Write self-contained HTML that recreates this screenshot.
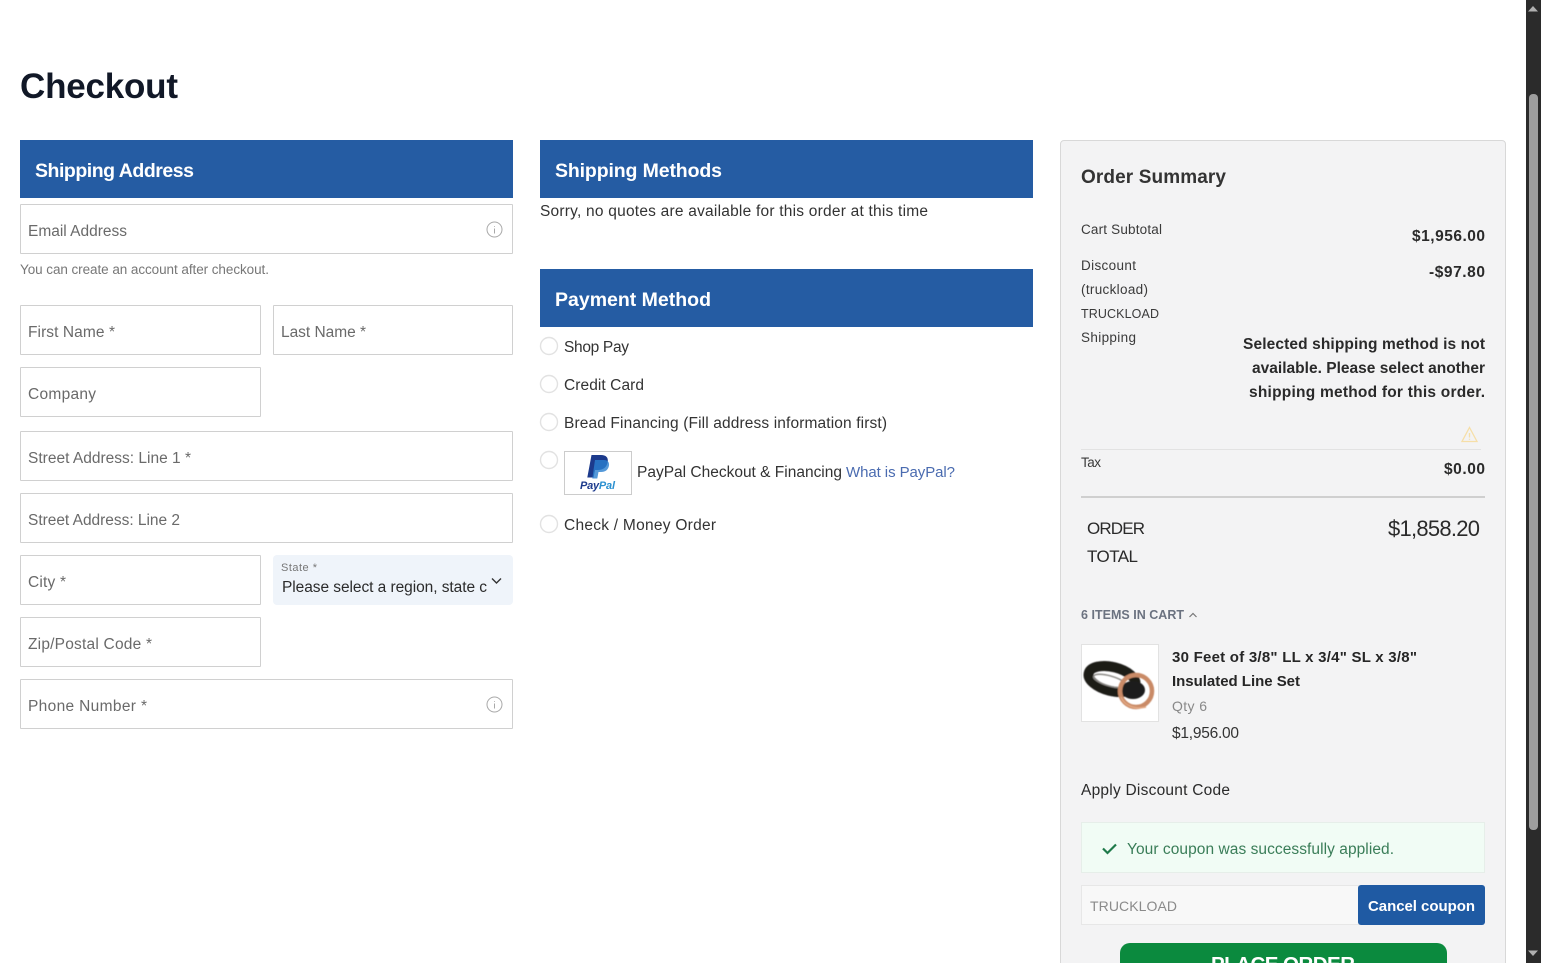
<!DOCTYPE html>
<html lang="en"><head><meta charset="utf-8"><title>Checkout</title>
<style>
html,body{margin:0;padding:0;width:1541px;height:963px;overflow:hidden;background:#fff}
body{position:relative;font-family:"Liberation Sans",sans-serif}
.b{position:absolute;box-sizing:border-box}
.h{background:#255ca3;height:58px;width:493px;top:140px}
.i{border:1px solid #d0d0d0;background:#fff;border-radius:1px;height:50px}
svg.t{position:absolute;left:0;top:0}
text{font-family:"Liberation Sans",sans-serif;font-size:15.5px;fill:#333}
.ph{fill:#6a6a6a}
.hd{font-size:19.5px;font-weight:700;fill:#fff}
.s{font-size:13.5px;fill:#3a3a3a}
.v{font-size:15.5px;font-weight:700;fill:#2a2a2a}
</style></head><body>
<div class="b h" style="left:20px"></div>
<div class="b h" style="left:540px"></div>
<div class="b h" style="left:540px;top:269px"></div>
<div class="b i" style="left:20px;top:204px;width:493px"></div>
<div class="b i" style="left:20px;top:305px;width:241px"></div>
<div class="b i" style="left:273px;top:305px;width:240px"></div>
<div class="b i" style="left:20px;top:367px;width:241px"></div>
<div class="b i" style="left:20px;top:431px;width:493px"></div>
<div class="b i" style="left:20px;top:493px;width:493px"></div>
<div class="b i" style="left:20px;top:555px;width:241px"></div>
<div class="b" style="left:273px;top:555px;width:240px;height:50px;background:#eff4fa;border-radius:4px"></div>
<div class="b i" style="left:20px;top:617px;width:241px"></div>
<div class="b i" style="left:20px;top:679px;width:493px"></div>
<div class="b" style="left:564px;top:451px;width:68px;height:44px;border:1px solid #ccc;background:#fff"></div>
<div class="b" style="left:1060px;top:140px;width:446px;height:840px;background:#f3f3f4;border:1px solid #d8d8d8;border-radius:4px"></div>
<div class="b" style="left:1081px;top:449px;width:400px;height:1px;background:#e2e2e2"></div>
<div class="b" style="left:1081px;top:496px;width:404px;height:2px;background:#cfcfcf"></div>
<div class="b" style="left:1081px;top:644px;width:78px;height:78px;background:#fff;border:1px solid #e2e2e2"></div>
<div class="b" style="left:1081px;top:822px;width:404px;height:51px;background:#f1fcf5;border:1px solid #e6eee9"></div>
<div class="b" style="left:1081px;top:885px;width:278px;height:40px;background:#f8f8f8;border:1px solid #e7e7e7"></div>
<div class="b" style="left:1358px;top:885px;width:127px;height:40px;background:#1f5aa3;border-radius:3px"></div>
<div class="b" style="left:1120px;top:943px;width:327px;height:40px;background:#0b8a3e;border-radius:10px"></div>
<div class="b" style="left:1526px;top:0;width:15px;height:963px;background:#2b2b2b"></div>
<div class="b" style="left:1529px;top:94px;width:9px;height:736px;background:#9e9e9e;border-radius:4px"></div>

<svg class="t" width="1541" height="963" viewBox="0 0 1541 963">
<defs><filter id="soft" x="-10%" y="-10%" width="120%" height="120%"><feGaussianBlur stdDeviation="0.6"/></filter></defs>
<g fill="none" stroke="#e2e2e2" stroke-width="1.4">
<circle cx="549" cy="346" r="8.5"/><circle cx="549" cy="384" r="8.5"/><circle cx="549" cy="422" r="8.5"/><circle cx="549" cy="460" r="8.5"/><circle cx="549" cy="524" r="8.5"/>
</g>
<g fill="none" stroke="#a8a8a8" stroke-width="1">
<circle cx="494.500" cy="229.500" r="7.500"/><path d="M494.500 226v.8M494.500 228.500v5"/>
<circle cx="494.500" cy="704.500" r="7.500"/><path d="M494.500 701v.8M494.500 703.500v5"/>
</g>
<path d="M492 578.500l4.500 4.500 4.500-4.500" fill="none" stroke="#333" stroke-width="1.400"/>
<path d="M1189.500 617l3.500-3.500 3.500 3.500" fill="none" stroke="#777" stroke-width="1.200"/>
<path d="M1103 848.500l4.500 4.500 8.500-8.500" fill="none" stroke="#1f7a4a" stroke-width="2.200"/>
<path d="M1469.500 427.500l7.500 14h-15zM1469.500 433v4.500M1469.500 438.800v1" fill="none" stroke="#f6dfa8" stroke-width="1.300"/>
<path d="M1528 11.500l5-5.500 5 5.500z" fill="#b0b0b0"/>
<path d="M1528 950.500l5 5.500 5-5.500z" fill="#b0b0b0"/>

<!-- PayPal mark -->
<path d="M591.500 455h9.500c5 0 7.500 2.500 6.700 7-1 5.500-4.700 8-9.700 8h-3l-1.400 7.500h-6.300z" fill="#1c3a8c"/>
<path d="M595 460h9c3.500 0 5.500 2.200 5 5.500-.8 4.500-3.800 6.500-8 6.500h-2.500l-1.200 6.500h-5z" fill="#2b7fd0" opacity=".8"/>
<text x="580" y="489" textLength="35" lengthAdjust="spacing" style="font-size:11px;font-weight:700;font-style:italic;fill:#1c3a8c">Pay<tspan style="fill:#2a90d0">Pal</tspan></text>

<!-- product image -->
<g fill="none" filter="url(#soft)">
<ellipse cx="1112" cy="679" rx="24" ry="12" transform="rotate(14 1112 679)" stroke="#1d1a18" stroke-width="10"/>
<ellipse cx="1110" cy="681" rx="17" ry="5" transform="rotate(16 1110 681)" stroke="#8c8a86" stroke-width="1.500"/>
<ellipse cx="1133" cy="690" rx="12" ry="9" fill="#1f1c1a"/>
<circle cx="1136" cy="691" r="16" stroke="#c98a66" stroke-width="4.500"/>
<path d="M1121 697c3 8 13 13 25 10" stroke="#e3a883" stroke-width="1.500"/>
</g>

<text x="20" y="98" textLength="158" lengthAdjust="spacing" style="font-size:35px;font-weight:700;fill:#111827">Checkout</text>
<text class="hd" x="35" y="177" textLength="159" lengthAdjust="spacing">Shipping Address</text>
<text class="hd" x="555" y="177" textLength="167" lengthAdjust="spacing">Shipping Methods</text>
<text class="hd" x="555" y="306" textLength="156" lengthAdjust="spacing">Payment Method</text>

<text class="ph" x="28" y="236" textLength="99" lengthAdjust="spacing">Email Address</text>
<text x="20" y="274" textLength="249" lengthAdjust="spacing" style="font-size:13.500px;fill:#777">You can create an account after checkout.</text>
<text class="ph" x="28" y="337" textLength="87" lengthAdjust="spacing">First Name *</text>
<text class="ph" x="281" y="337" textLength="85" lengthAdjust="spacing">Last Name *</text>
<text class="ph" x="28" y="399" textLength="68" lengthAdjust="spacing">Company</text>
<text class="ph" x="28" y="463" textLength="163" lengthAdjust="spacing">Street Address: Line 1 *</text>
<text class="ph" x="28" y="525" textLength="152" lengthAdjust="spacing">Street Address: Line 2</text>
<text class="ph" x="28" y="587" textLength="38" lengthAdjust="spacing">City *</text>
<text x="281" y="571" textLength="36" lengthAdjust="spacing" style="font-size:11px;fill:#777">State  *</text>
<text x="282" y="592" textLength="205" lengthAdjust="spacing" style="fill:#2b2b2b">Please select a region, state c</text>
<text class="ph" x="28" y="649" textLength="124" lengthAdjust="spacing">Zip/Postal Code *</text>
<text class="ph" x="28" y="711" textLength="119" lengthAdjust="spacing">Phone Number *</text>

<text x="540" y="216" textLength="388" lengthAdjust="spacing">Sorry, no quotes are available for this order at this time</text>
<text x="564" y="352" textLength="65" lengthAdjust="spacing">Shop Pay</text>
<text x="564" y="390" textLength="80" lengthAdjust="spacing">Credit Card</text>
<text x="564" y="428" textLength="323" lengthAdjust="spacing">Bread Financing (Fill address information first)</text>
<text x="637" y="477" textLength="205" lengthAdjust="spacing">PayPal Checkout &amp; Financing</text>
<text x="846" y="477" textLength="109" lengthAdjust="spacing" style="fill:#4a6bb0;font-size:15px">What is PayPal?</text>
<text x="564" y="530" textLength="152" lengthAdjust="spacing">Check / Money Order</text>

<text x="1081" y="183" textLength="145" lengthAdjust="spacing" style="font-size:19px;font-weight:700;fill:#333">Order Summary</text>
<text class="s" x="1081" y="234" textLength="81" lengthAdjust="spacing">Cart Subtotal</text>
<text class="v" x="1412" y="241" textLength="73" lengthAdjust="spacing">$1,956.00</text>
<text class="s" x="1081" y="270" textLength="55" lengthAdjust="spacing">Discount</text>
<text class="s" x="1081" y="294" textLength="67" lengthAdjust="spacing">(truckload)</text>
<text class="s" x="1081" y="318" textLength="78" lengthAdjust="spacing" style="font-size:12.5px">TRUCKLOAD</text>
<text class="s" x="1081" y="342" textLength="55" lengthAdjust="spacing">Shipping</text>
<text class="v" x="1429" y="277" textLength="56" lengthAdjust="spacing">-$97.80</text>
<text class="v" x="1243" y="349" textLength="242" lengthAdjust="spacing">Selected shipping method is not</text>
<text class="v" x="1252" y="373" textLength="233" lengthAdjust="spacing">available. Please select another</text>
<text class="v" x="1249" y="397" textLength="236" lengthAdjust="spacing">shipping method for this order.</text>
<text class="s" x="1081" y="467" textLength="20" lengthAdjust="spacing">Tax</text>
<text class="v" x="1444" y="474" textLength="41" lengthAdjust="spacing">$0.00</text>
<text x="1087" y="534" textLength="58" lengthAdjust="spacing" style="font-size:17px;fill:#2a2a2a">ORDER</text>
<text x="1087" y="562" textLength="51" lengthAdjust="spacing" style="font-size:17px;fill:#2a2a2a">TOTAL</text>
<text x="1388" y="536" textLength="92" lengthAdjust="spacing" style="font-size:22px;fill:#2a2a2a">$1,858.20</text>
<text x="1081" y="619" textLength="103" lengthAdjust="spacing" style="font-size:12.5px;font-weight:700;fill:#6b7280">6 ITEMS IN CART</text>
<text x="1172" y="662" textLength="245" lengthAdjust="spacing" style="font-weight:700;fill:#262626;font-size:15px">30 Feet of 3/8" LL x 3/4" SL x 3/8"</text>
<text x="1172" y="686" textLength="128" lengthAdjust="spacing" style="font-weight:700;fill:#262626;font-size:15px">Insulated Line Set</text>
<text x="1172" y="711" textLength="35" lengthAdjust="spacing" style="font-size:14px;fill:#888">Qty  6</text>
<text x="1172" y="738" textLength="67" lengthAdjust="spacing">$1,956.00</text>
<text x="1081" y="795" textLength="149" lengthAdjust="spacing" style="fill:#2a2a2a">Apply Discount Code</text>
<text x="1127" y="854" textLength="267" lengthAdjust="spacing" style="fill:#3a7d58">Your coupon was successfully applied.</text>
<text x="1090" y="911" textLength="87" lengthAdjust="spacing" style="fill:#8a8a8a;font-size:14px">TRUCKLOAD</text>
<text x="1368" y="911" textLength="107" lengthAdjust="spacing" style="font-weight:700;fill:#fff;font-size:15px">Cancel coupon</text>
<text x="1211" y="971" textLength="144" lengthAdjust="spacing" style="font-size:20.5px;font-weight:700;fill:#fff">PLACE ORDER</text>
</svg>
</body></html>
